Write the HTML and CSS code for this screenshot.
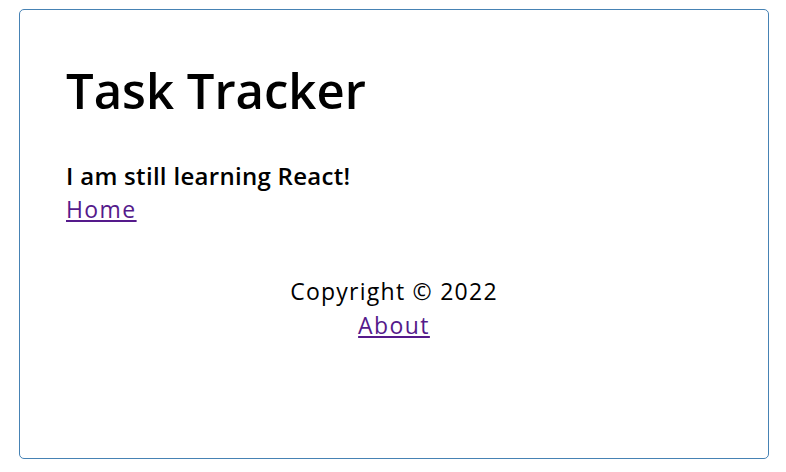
FILE: index.html
```html
<!DOCTYPE html>
<html>
<head>
<meta charset="utf-8">
<link rel="stylesheet" href="styles.css">
</head>
<body>
<div class="container">
  <header class="header">
    <h1 class="title">Task Tracker</h1>
  </header>
  <h3 class="subtitle">I am still learning React!</h3>
  <a class="link" href="#">Home</a>
  <footer class="footer">
    <p class="copy">Copyright &copy; 2022</p>
    <a class="link" href="#">About</a>
  </footer>
</div>
</body>
</html>
```

FILE: styles.css
```css
* { box-sizing: border-box; }
html, body { margin: 0; padding: 0; background: #fff; }
body { font-family: "Open Sans", "Noto Sans", sans-serif; color: #000; }
.container {
  width: 750px;
  height: 450px;
  margin: 9px 0 0 19px;
  border: 1px solid #4682b4;
  border-radius: 5px;
  padding: 50px 46px 0 46px;
  display: flex;
  flex-direction: column;
  align-items: flex-start;
}
.header { margin: 0; }
.title {
  margin: 0;
  font-size: 49px;
  font-weight: 600;
  letter-spacing: 0;
  line-height: 60px;
}
.subtitle {
  margin: 40px 0 0 0;
  font-size: 24px;
  font-weight: 600;
  letter-spacing: 0.3px;
  line-height: 32px;
}
.link {
  color: #551a8b;
  font-size: 23px;
  letter-spacing: 1.4px;
  line-height: 34px;
  text-decoration: underline;
}
.footer {
  align-self: stretch;
  margin-top: 48px;
  text-align: center;
  display: flex;
  flex-direction: column;
  align-items: center;
}
.copy { margin: 0; font-size: 23px; letter-spacing: 1.25px; line-height: 34px; }
```
